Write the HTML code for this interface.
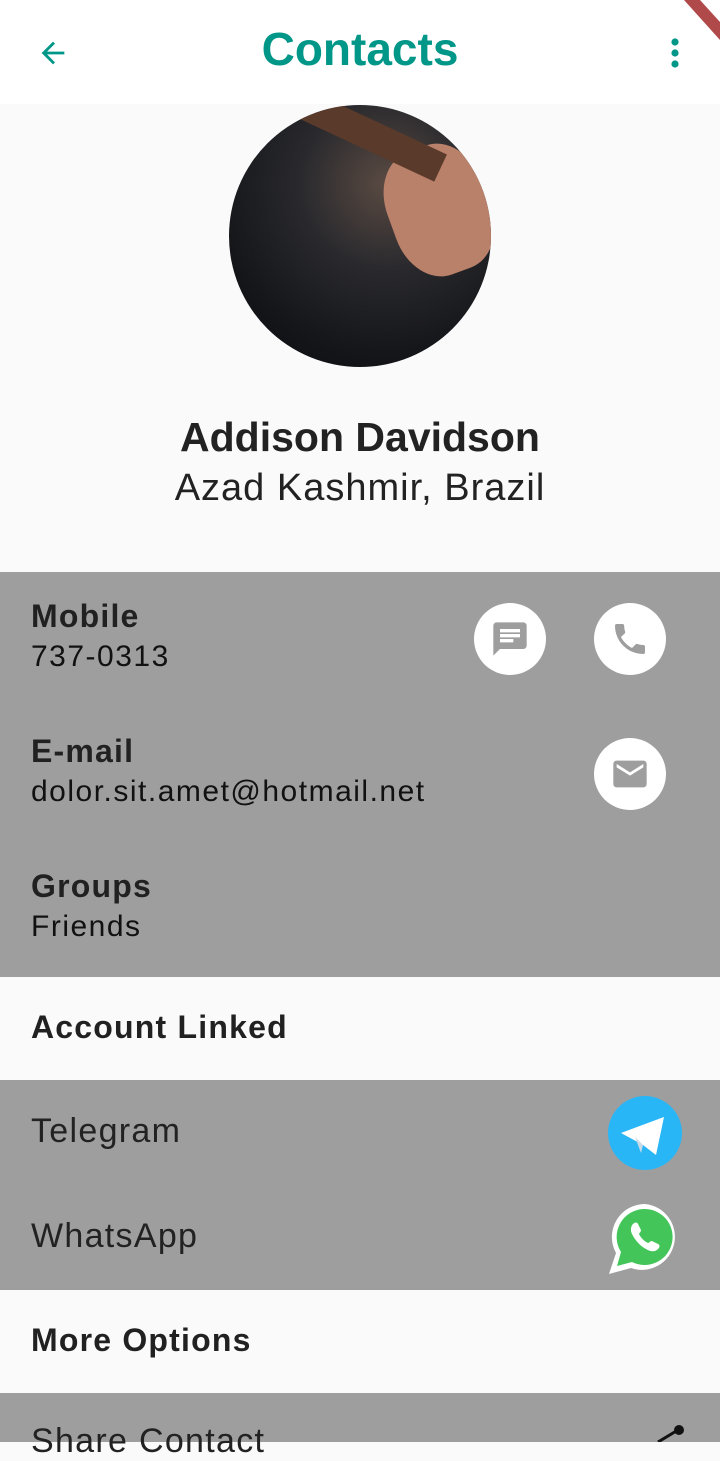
<!DOCTYPE html>
<html><head><meta charset="utf-8"><style>
body{margin:0;width:720px;height:1442px;overflow:hidden;background:#fafafa;font-family:"Liberation Sans",sans-serif;color:#212121;position:relative}
.a{position:absolute}
.g{background:#9e9e9e;left:0;width:720px}
.lbl{font-size:32px;font-weight:bold;color:#212121;letter-spacing:1.2px}
.val{font-size:30px;color:#111;letter-spacing:1.5px}
.big{font-size:34px;color:#222;letter-spacing:1.3px}
.circ{width:72px;height:72px;border-radius:50%;background:#fff;display:flex;align-items:center;justify-content:center}
</style></head><body>
<div class="a" style="left:0;top:0;width:720px;height:104px;background:#fff"></div>
<svg class="a" style="left:36px;top:36px" width="34" height="34" viewBox="0 0 24 24"><path d="M20 11H7.8l5.6-5.6L12 4l-8 8 8 8 1.4-1.4L7.8 13H20z" fill="#009688"/></svg>
<div class="a" style="left:0;width:720px;top:22px;text-align:center;font-size:46px;color:#009688;font-weight:bold">Contacts</div>
<svg class="a" style="left:664px;top:36px" width="22" height="34" viewBox="0 0 22 34"><circle cx="11" cy="6" r="3.6" fill="#009688"/><circle cx="11" cy="17" r="3.6" fill="#009688"/><circle cx="11" cy="28" r="3.6" fill="#009688"/></svg>
<svg class="a" style="left:670px;top:0" width="50" height="50"><polygon points="14,0 30,0 50,22 50,40" fill="#b04a4a"/></svg>
<div class="a" style="left:229px;top:105px;width:262px;height:262px;border-radius:50%;background:radial-gradient(circle at 60% 30%,#5a4a42 0%,#2a2a2e 35%,#15161a 70%,#0a0a0c 100%);overflow:hidden">
<div class="a" style="left:160px;top:40px;width:100px;height:130px;border-radius:40%;background:#b9806a;transform:rotate(-20deg)"></div>
<div class="a" style="left:40px;top:10px;width:180px;height:30px;background:#5a3a2a;transform:rotate(25deg)"></div>
</div>
<div class="a" style="left:0;width:720px;top:414px;text-align:center;font-size:41px;font-weight:bold;color:#222">Addison Davidson</div>
<div class="a" style="left:0;width:720px;top:467px;text-align:center;font-size:38px;color:#222;letter-spacing:1px">Azad Kashmir, Brazil</div>

<div class="a g" style="top:572px;height:405px"></div>
<div class="a lbl" style="left:31px;top:598px">Mobile</div>
<div class="a val" style="left:31px;top:640px">737-0313</div>
<div class="a circ" style="left:474px;top:603px"><svg width="40" height="40" viewBox="0 0 24 24"><path d="M20 2H4c-1.1 0-2 .9-2 2v18l4-4h14c1.1 0 2-.9 2-2V4c0-1.1-.9-2-2-2zM6 9h12v2H6zm8 5H6v-2h8zm4-6H6V6h12z" fill="#9e9e9e"/></svg></div>
<div class="a circ" style="left:594px;top:603px"><svg width="40" height="40" viewBox="0 0 24 24"><path d="M6.6 10.8c1.4 2.8 3.8 5.1 6.6 6.6l2.2-2.2c.3-.3.7-.4 1-.2 1.1.4 2.3.6 3.6.6.6 0 1 .4 1 1V20c0 .6-.4 1-1 1C10.6 21 3 13.4 3 4c0-.6.4-1 1-1h3.5c.6 0 1 .4 1 1 0 1.3.2 2.5.6 3.6.1.3 0 .7-.2 1z" fill="#9e9e9e"/></svg></div>
<div class="a lbl" style="left:31px;top:733px">E-mail</div>
<div class="a val" style="left:31px;top:775px">dolor.sit.amet@hotmail.net</div>
<div class="a circ" style="left:594px;top:738px"><svg width="40" height="40" viewBox="0 0 24 24"><path d="M20 4H4c-1.1 0-2 .9-2 2v12c0 1.1.9 2 2 2h16c1.1 0 2-.9 2-2V6c0-1.1-.9-2-2-2zm0 4l-8 5-8-5V6l8 5 8-5z" fill="#9e9e9e"/></svg></div>
<div class="a lbl" style="left:31px;top:868px">Groups</div>
<div class="a val" style="left:31px;top:910px">Friends</div>

<div class="a lbl" style="left:31px;top:1009px">Account Linked</div>

<div class="a g" style="top:1080px;height:210px"></div>
<div class="a big" style="left:31px;top:1112px">Telegram</div>
<svg class="a" style="left:607px;top:1095px" width="76" height="76" viewBox="0 0 76 76"><circle cx="38" cy="38" r="37" fill="#29b6f6"/><path d="M14 38 L57 22 L49 60 L36 50 Z" fill="#fff"/><path d="M28 42 L34 58 L36 50 Z" fill="#c8dae6"/></svg>
<div class="a big" style="left:31px;top:1217px">WhatsApp</div>
<svg class="a" style="left:606px;top:1200px" width="78" height="78" viewBox="0 0 78 78"><path d="M39 4a33 33 0 0 0-29 49L3 74l22-6A33 33 0 1 0 39 4z" fill="#fff"/><path d="M39 9a28 28 0 0 0-24 43l-4 14 15-4A28 28 0 1 0 39 9z" fill="#43c55a"/><path d="M27 24c2-2 4-2 5 0l3 6c0 2-2 3-2 4 2 4 5 7 9 9 1 0 2-2 4-2l6 3c2 1 2 3 0 5-3 3-7 3-12 0-6-3-11-9-14-15-2-4-1-8 1-10z" fill="#fff"/></svg>

<div class="a lbl" style="left:31px;top:1322px">More Options</div>
<div class="a g" style="top:1393px;height:49px"></div>
<div class="a big" style="left:31px;top:1422px">Share Contact</div>
<svg class="a" style="left:650px;top:1420px" width="40" height="22"><line x1="8" y1="22" x2="28" y2="10" stroke="#111" stroke-width="3"/><circle cx="29" cy="10" r="5" fill="#111"/></svg>
</body></html>
